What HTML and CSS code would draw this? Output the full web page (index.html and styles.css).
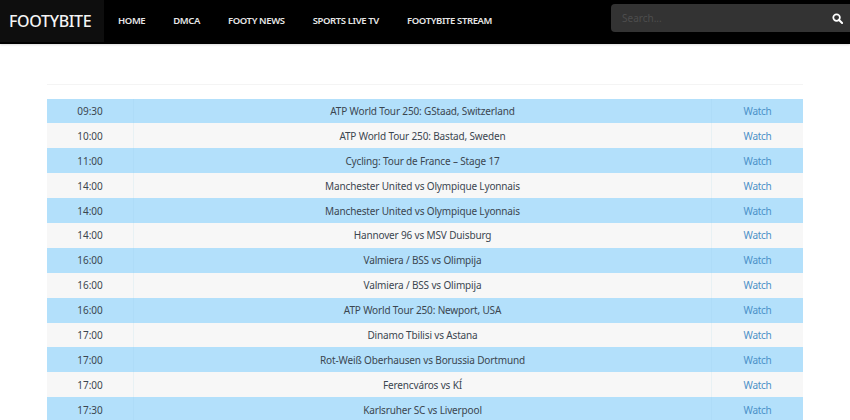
FILE: index.html
```html
<!DOCTYPE html>
<html lang="en">
<head>
<meta charset="utf-8">
<title>Footybite</title>
<link rel="stylesheet" href="styles.css">
</head>
<body>
<header class="topbar">
  <a class="brand" href="#">FOOTYBITE</a>
  <nav class="nav">
    <a href="#">HOME</a>
    <a href="#">DMCA</a>
    <a href="#">FOOTY NEWS</a>
    <a href="#">SPORTS LIVE TV</a>
    <a href="#">FOOTYBITE STREAM</a>
  </nav>
  <form class="search">
    <span class="search-text">Search...</span>
    <svg class="search-icon" viewBox="0 0 12 12" width="11" height="11" aria-hidden="true"><circle cx="5" cy="5" r="3.6" fill="none" stroke="#fff" stroke-width="1.9"/><path d="M7.7 7.7 11 11" stroke="#fff" stroke-width="2.2" stroke-linecap="round"/></svg>
  </form>
</header>
<main class="content">
  <div class="rule"></div>
  <table class="schedule">
    <colgroup><col class="c-time"><col class="c-event"><col class="c-link"></colgroup>
    <tbody>
      <tr><td>09:30</td><td>ATP World Tour 250: GStaad, Switzerland</td><td><a href="#">Watch</a></td></tr>
      <tr><td>10:00</td><td>ATP World Tour 250: Bastad, Sweden</td><td><a href="#">Watch</a></td></tr>
      <tr><td>11:00</td><td>Cycling: Tour de France – Stage 17</td><td><a href="#">Watch</a></td></tr>
      <tr><td>14:00</td><td>Manchester United vs Olympique Lyonnais</td><td><a href="#">Watch</a></td></tr>
      <tr><td>14:00</td><td>Manchester United vs Olympique Lyonnais</td><td><a href="#">Watch</a></td></tr>
      <tr><td>14:00</td><td>Hannover 96 vs MSV Duisburg</td><td><a href="#">Watch</a></td></tr>
      <tr><td>16:00</td><td>Valmiera / BSS vs Olimpija</td><td><a href="#">Watch</a></td></tr>
      <tr><td>16:00</td><td>Valmiera / BSS vs Olimpija</td><td><a href="#">Watch</a></td></tr>
      <tr><td>16:00</td><td>ATP World Tour 250: Newport, USA</td><td><a href="#">Watch</a></td></tr>
      <tr><td>17:00</td><td>Dinamo Tbilisi vs Astana</td><td><a href="#">Watch</a></td></tr>
      <tr><td>17:00</td><td>Rot-Weiß Oberhausen vs Borussia Dortmund</td><td><a href="#">Watch</a></td></tr>
      <tr><td>17:00</td><td>Ferencváros vs KÍ</td><td><a href="#">Watch</a></td></tr>
      <tr><td>17:30</td><td>Karlsruher SC vs Liverpool</td><td><a href="#">Watch</a></td></tr>
    </tbody>
  </table>
</main>
</body>
</html>
```
FILE: styles.css
```css
* { box-sizing: border-box; }
html, body { margin: 0; height: 420px; overflow: hidden; background: #fff; }
body { font-family: "Noto Sans", "Open Sans", sans-serif; }
a { text-decoration: none; color: inherit; }

.topbar {
  display: flex;
  align-items: stretch;
  height: 44px;
  padding-bottom: 2px;
  background: #000;
  box-shadow: 0 1px 2px #dedede;
}
.brand {
  display: flex;
  align-items: center;
  width: 104px;
  padding: 0 0 1px 9px;
  background: #0e0e0e;
  color: #f4f4f4;
  font-size: 16px;
  font-weight: 500;
  letter-spacing: -0.35px;
}
.nav {
  display: flex;
  align-items: center;
  gap: 28px;
  padding: 0 0 1px 14px;
  flex: 1;
  color: #e8e8e8;
  font-size: 9.5px;
  font-weight: 600;
  letter-spacing: -0.38px;
}
.search {
  display: flex;
  align-items: center;
  justify-content: space-between;
  width: 239px;
  height: 28px;
  margin-top: 4px;
  padding: 0 7px 0 11px;
  background: #333;
  border-radius: 4px 0 0 4px;
}
.search-text { color: #4d4d4d; font-size: 10px; }

.content { padding: 40px 47px 0; }
.rule { height: 1px; margin-bottom: 13.5px; background: #f4f4f4; }
.schedule {
  width: 756px;
  table-layout: fixed;
  border-collapse: separate;
  border-spacing: 0;
  font-size: 10px;
  color: #3b4650;
}
.c-time { width: 86px; }
.c-link { width: 92px; }
.schedule td {
  height: 24.9px;
  padding: 0;
  text-align: center;
  vertical-align: middle;
  border-left: 1px solid #e8f1f4;
}
.schedule td:first-child { border-left: 0; }
.schedule td:nth-child(2) { letter-spacing: -0.15px; }
.schedule tr:nth-child(odd) td { background: #b3e0fb; border-left-color: #aedcf8; }
.schedule tr:nth-child(even) td { background: #f7f7f7; }
.schedule a { color: #4a90c8; letter-spacing: -0.3px; }
```
